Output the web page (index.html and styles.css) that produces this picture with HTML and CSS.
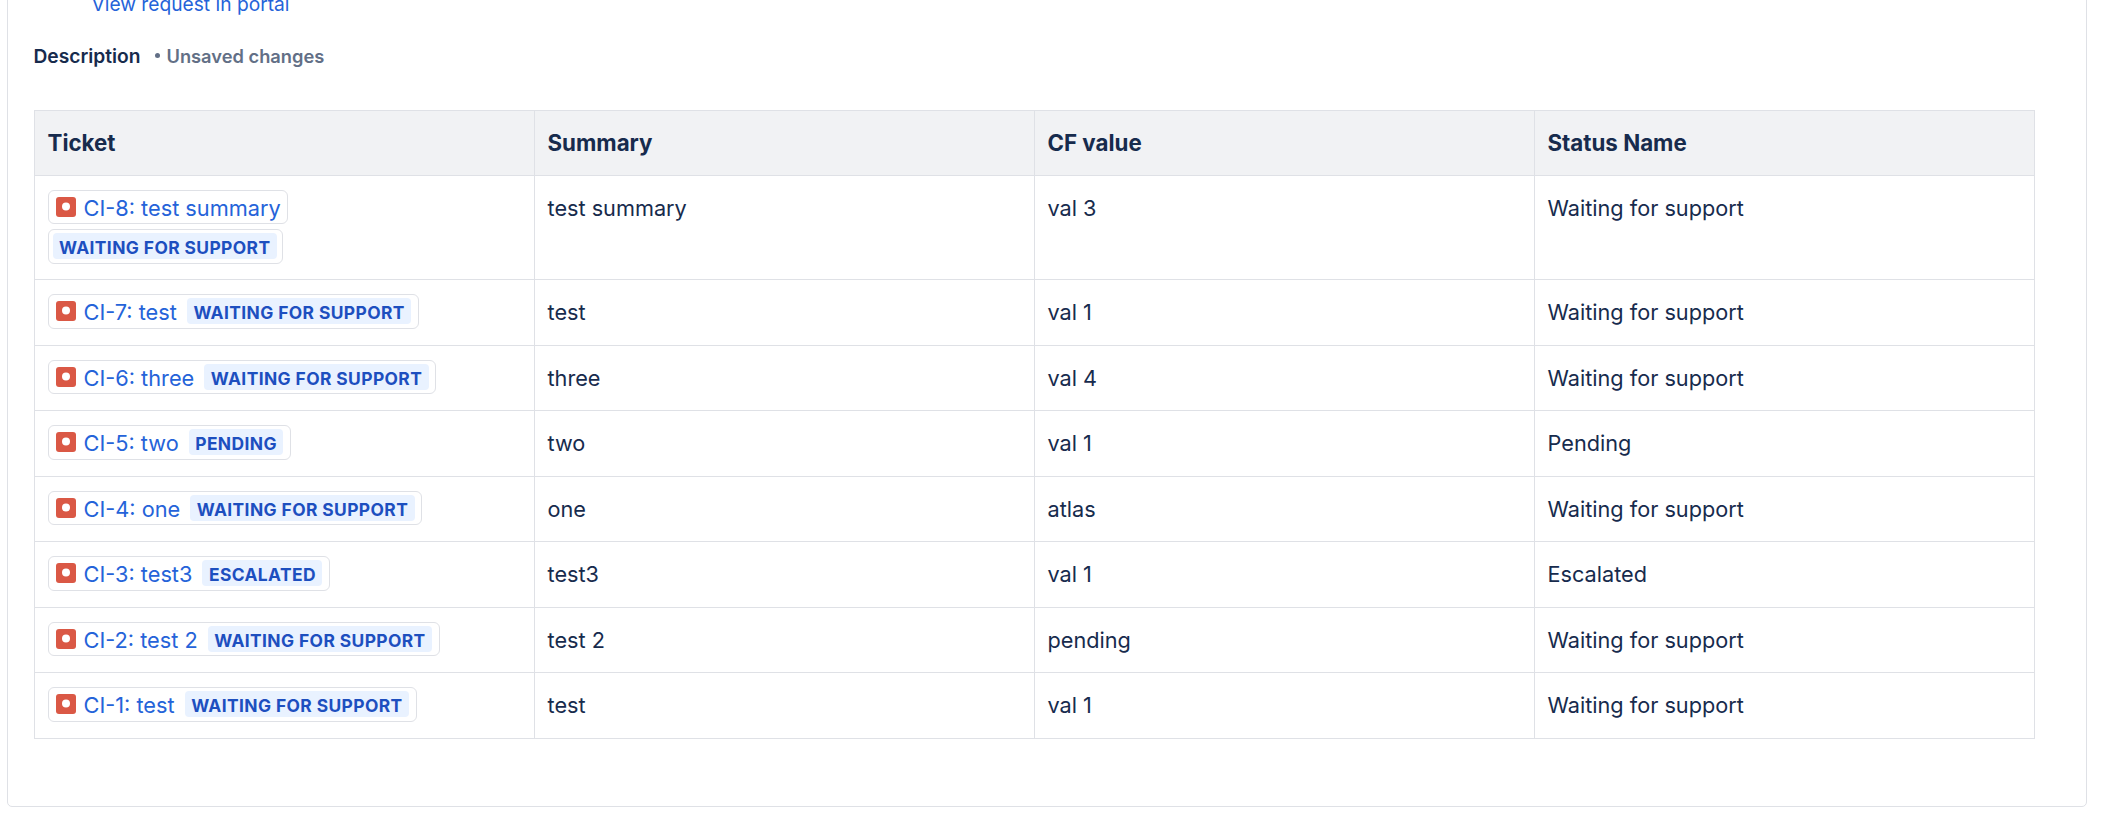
FILE: index.html
```html
<!DOCTYPE html>
<html lang="en">
<head>
<meta charset="utf-8">
<title>Request</title>
<link rel="stylesheet" href="styles.css">
</head>
<body>
<main class="card">
  <a class="portal-link" href="#">View request in portal</a>
  <div class="desc-head">
    <span class="desc-title">Description</span>
    <span class="desc-status"><span class="dot"></span>Unsaved changes</span>
  </div>
  <table class="issues">
    <thead>
      <tr><th>Ticket</th><th>Summary</th><th>CF value</th><th>Status Name</th></tr>
    </thead>
    <tbody>
      <tr class="tall">
        <td>
          <div class="chip chip-first"><svg class="ic" viewBox="0 0 20 20"><rect width="20" height="20" rx="3" fill="#DA5845"/><circle cx="10" cy="9.5" r="4" fill="#fff"/></svg><a href="#">CI-8: test summary</a></div>
          <div class="chip chip-second"><span class="loz">WAITING FOR SUPPORT</span></div>
        </td>
        <td>test summary</td><td>val 3</td><td>Waiting for support</td>
      </tr>
      <tr>
        <td><div class="chip"><svg class="ic" viewBox="0 0 20 20"><rect width="20" height="20" rx="3" fill="#DA5845"/><circle cx="10" cy="9.5" r="4" fill="#fff"/></svg><a href="#">CI-7: test</a><span class="loz">WAITING FOR SUPPORT</span></div></td>
        <td>test</td><td>val 1</td><td>Waiting for support</td>
      </tr>
      <tr>
        <td><div class="chip"><svg class="ic" viewBox="0 0 20 20"><rect width="20" height="20" rx="3" fill="#DA5845"/><circle cx="10" cy="9.5" r="4" fill="#fff"/></svg><a href="#">CI-6: three</a><span class="loz">WAITING FOR SUPPORT</span></div></td>
        <td>three</td><td>val 4</td><td>Waiting for support</td>
      </tr>
      <tr>
        <td><div class="chip"><svg class="ic" viewBox="0 0 20 20"><rect width="20" height="20" rx="3" fill="#DA5845"/><circle cx="10" cy="9.5" r="4" fill="#fff"/></svg><a href="#">CI-5: two</a><span class="loz">PENDING</span></div></td>
        <td>two</td><td>val 1</td><td>Pending</td>
      </tr>
      <tr>
        <td><div class="chip"><svg class="ic" viewBox="0 0 20 20"><rect width="20" height="20" rx="3" fill="#DA5845"/><circle cx="10" cy="9.5" r="4" fill="#fff"/></svg><a href="#">CI-4: one</a><span class="loz">WAITING FOR SUPPORT</span></div></td>
        <td>one</td><td>atlas</td><td>Waiting for support</td>
      </tr>
      <tr>
        <td><div class="chip"><svg class="ic" viewBox="0 0 20 20"><rect width="20" height="20" rx="3" fill="#DA5845"/><circle cx="10" cy="9.5" r="4" fill="#fff"/></svg><a href="#">CI-3: test3</a><span class="loz">ESCALATED</span></div></td>
        <td>test3</td><td>val 1</td><td>Escalated</td>
      </tr>
      <tr>
        <td><div class="chip"><svg class="ic" viewBox="0 0 20 20"><rect width="20" height="20" rx="3" fill="#DA5845"/><circle cx="10" cy="9.5" r="4" fill="#fff"/></svg><a href="#">CI-2: test 2</a><span class="loz">WAITING FOR SUPPORT</span></div></td>
        <td>test 2</td><td>pending</td><td>Waiting for support</td>
      </tr>
      <tr>
        <td><div class="chip"><svg class="ic" viewBox="0 0 20 20"><rect width="20" height="20" rx="3" fill="#DA5845"/><circle cx="10" cy="9.5" r="4" fill="#fff"/></svg><a href="#">CI-1: test</a><span class="loz">WAITING FOR SUPPORT</span></div></td>
        <td>test</td><td>val 1</td><td>Waiting for support</td>
      </tr>
    </tbody>
  </table>
</main>
</body>
</html>
```
FILE: styles.css
```css
html, body {
  margin: 0;
  height: 840px;
  overflow: hidden;
  background: #fff;
}
body {
  font-family: Inter, "Liberation Sans", sans-serif;
  color: #172B4D;
  padding: 0 29px 0 7px;
  box-sizing: border-box;
}
.card {
  margin-top: -20px;
  height: 827px;
  box-sizing: border-box;
  border: 1.5px solid #DFE1E6;
  border-radius: 5px;
  padding: 0 51px 0 25.5px;
}
.portal-link {
  display: block;
  margin-left: 58px;
  font-size: 19.2px;
  line-height: 28px;
  height: 25px;
  padding-top: 9px;
  color: #2563D9;
  text-decoration: none;
}
.desc-head {
  display: flex;
  align-items: center;
  height: 28px;
  margin-top: 26.5px;
}
.desc-title {
  font-size: 19.2px;
  font-weight: 600;
}
.desc-status {
  display: flex;
  align-items: center;
  margin-left: 15px;
  font-size: 18.3px;
  font-weight: 600;
  color: #626F86;
}
.dot {
  width: 5px;
  height: 5px;
  border-radius: 50%;
  background: #626F86;
  margin-right: 6px;
}
.issues {
  margin-top: 40px;
  width: 2001px;
  table-layout: fixed;
  border-collapse: collapse;
  font-size: 21.7px;
  line-height: 32px;
}
.issues th, .issues td {
  border: 1.5px solid #DFE1E6;
  padding: 0 13px;
  text-align: left;
  vertical-align: top;
}
.issues th {
  background: #F1F2F4;
  font-weight: 700;
  font-size: 22.3px;
  height: 65px;
  vertical-align: middle;
  box-sizing: border-box;
}
.issues td {
  height: 65.5px;
  padding-top: 16px;
  box-sizing: border-box;
}
.issues .tall td {
  height: 104.5px;
}
.chip {
  display: inline-flex;
  align-items: center;
  height: 34.5px;
  box-sizing: border-box;
  padding: 0 6.5px 0 7px;
  border: 1.5px solid #DFE1E6;
  border-radius: 6px;
  vertical-align: top;
  white-space: nowrap;
}
.issues td:first-child {
  padding-top: 14px;
}
.chip-first {
  display: flex;
  width: 240px;
  margin-bottom: 5px;
}
.chip-second {
  display: flex;
  width: 235px;
  padding: 0 5px 0 4px;
}
.ic {
  width: 20px;
  height: 20px;
  flex: none;
  margin-right: 8px;
}
.chip a {
  color: #2563D9;
  font-size: 21.75px;
  line-height: 32px;
  padding-top: 2px;
  text-decoration: none;
}
.loz {
  margin-left: 10px;
  height: 26px;
  line-height: 29px;
  padding: 0 6.5px;
  background: #E9F2FF;
  border-radius: 4px;
  color: #1D4FBF;
  font-size: 17.4px;
  font-weight: 700;
  letter-spacing: 0.4px;
}
.chip-second .loz {
  margin-left: 0;
}
```
